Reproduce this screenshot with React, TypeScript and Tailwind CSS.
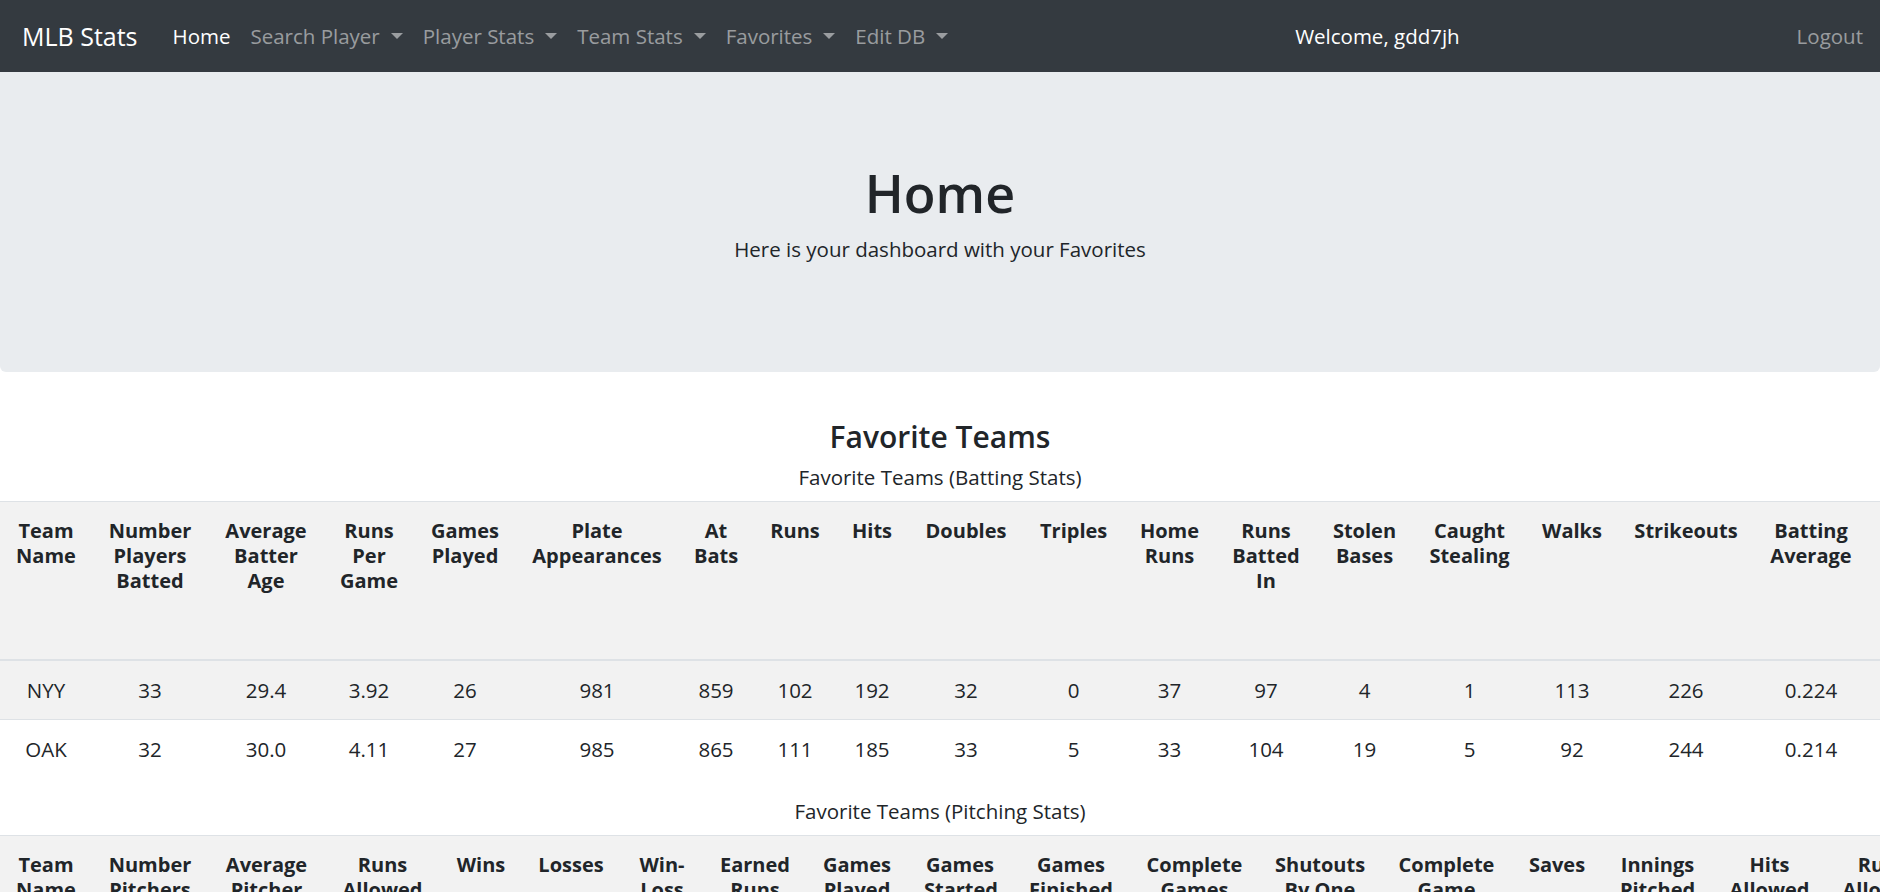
import { Fragment } from 'react'

type Col = { label: string; width: string }

const NAV_LINKS = [
  { label: 'Search Player' },
  { label: 'Player Stats' },
  { label: 'Team Stats' },
  { label: 'Favorites' },
  { label: 'Edit DB' },
]

const BATTING_COLS: Col[] = [
  { label: 'Team Name', width: 'w-[92px]' },
  { label: 'Number Players Batted', width: 'w-[116px]' },
  { label: 'Average Batter Age', width: 'w-[116px]' },
  { label: 'Runs Per Game', width: 'w-[90px]' },
  { label: 'Games Played', width: 'w-[102px]' },
  { label: 'Plate Appearances', width: 'w-[162px]' },
  { label: 'At Bats', width: 'w-[76px]' },
  { label: 'Runs', width: 'w-[82px]' },
  { label: 'Hits', width: 'w-[72px]' },
  { label: 'Doubles', width: 'w-[116px]' },
  { label: 'Triples', width: 'w-[99px]' },
  { label: 'Home Runs', width: 'w-[93px]' },
  { label: 'Runs Batted In', width: 'w-[100px]' },
  { label: 'Stolen Bases', width: 'w-[97px]' },
  { label: 'Caught Stealing', width: 'w-[113px]' },
  { label: 'Walks', width: 'w-[92px]' },
  { label: 'Strikeouts', width: 'w-[136px]' },
  { label: 'Batting Average', width: 'w-[114px]' },
  { label: 'On Base Percentage', width: 'w-[150px]' },
  { label: 'Slugging Percentage', width: 'w-[150px]' },
  { label: 'On Base Plus Slugging Percentage', width: 'w-[150px]' },
]

const BATTING_ROWS = [
  ['NYY', '33', '29.4', '3.92', '26', '981', '859', '102', '192', '32', '0', '37', '97', '4', '1', '113', '226', '0.224', '0.316', '0.401', '0.717'],
  ['OAK', '32', '30.0', '4.11', '27', '985', '865', '111', '185', '33', '5', '33', '104', '19', '5', '92', '244', '0.214', '0.295', '0.384', '0.679'],
]

const PITCHING_COLS: Col[] = [
  { label: 'Team Name', width: 'w-[92px]' },
  { label: 'Number Pitchers Used', width: 'w-[116px]' },
  { label: 'Average Pitcher Age', width: 'w-[117px]' },
  { label: 'Runs Allowed Per Game', width: 'w-[115px]' },
  { label: 'Wins', width: 'w-[82px]' },
  { label: 'Losses', width: 'w-[98px]' },
  { label: 'Win-Loss %', width: 'w-[84px]' },
  { label: 'Earned Runs Average', width: 'w-[102px]' },
  { label: 'Games Played', width: 'w-[102px]' },
  { label: 'Games Started', width: 'w-[104px]' },
  { label: 'Games Finished', width: 'w-[118px]' },
  { label: 'Complete Games', width: 'w-[129px]' },
  { label: 'Shutouts By One Pitcher', width: 'w-[122px]' },
  { label: 'Complete Game Shutouts', width: 'w-[131px]' },
  { label: 'Saves', width: 'w-[90px]' },
  { label: 'Innings Pitched', width: 'w-[111px]' },
  { label: 'Hits Allowed', width: 'w-[113px]' },
  { label: 'Runs Allowed', width: 'w-[113px]' },
  { label: 'Home Runs Allowed', width: 'w-[113px]' },
  { label: 'Walks Allowed', width: 'w-[113px]' },
]

const PITCHING_ROWS = [
  ['NYY', '24', '29.8', '4.12', '14', '12', '0.538', '3.78', '26', '26', '26', '0', '2', '0', '7', '231.0', '205', '107', '28', '84'],
  ['OAK', '22', '28.9', '4.30', '13', '14', '0.481', '3.95', '27', '27', '27', '1', '1', '1', '6', '238.1', '221', '116', '31', '90'],
]

function Caret() {
  return (
    <span className="ml-[11px] inline-block h-0 w-0 border-x-[6px] border-t-[6px] border-x-transparent border-t-current" />
  )
}

function Navbar() {
  return (
    <nav className="flex h-[72px] items-center bg-[#343a40] pl-[22px] pr-[17px]">
      <a href="#" className="mr-[25px] text-[25px] leading-[36px] text-white">
        MLB Stats
      </a>
      <a href="#" className="px-[10px] text-[20.5px] leading-[30px] text-white">
        Home
      </a>
      {NAV_LINKS.map((link) => (
        <a
          key={link.label}
          href="#"
          className="flex items-center px-[10px] text-[20.5px] leading-[30px] text-white/50"
        >
          {link.label}
          <Caret />
        </a>
      ))}
      <span className="mx-auto text-[20.5px] leading-[30px] text-white">Welcome, gdd7jh</span>
      <a href="#" className="text-[20.5px] leading-[30px] text-white/50">
        Logout
      </a>
    </nav>
  )
}

function StatsTable({ caption, cols, rows, width }: { caption: string; cols: Col[]; rows: string[][]; width: string }) {
  return (
    <Fragment>
      <div className="mb-[11px] text-center text-[20.5px] leading-[26px]">{caption}</div>
      <div className="mb-[20px] w-full overflow-hidden">
        <table className={`table-fixed border-collapse ${width}`}>
          <colgroup>
            {cols.map((c) => (
              <col key={c.label} className={c.width} />
            ))}
          </colgroup>
          <thead>
            <tr className="bg-[#f2f2f2]">
              {cols.map((c) => (
                <th
                  key={c.label}
                  className="h-[158px] border-t border-b-2 border-[#dee2e6] px-4 py-4 text-center align-top text-[20px] font-bold leading-[25px]"
                >
                  {c.label}
                </th>
              ))}
            </tr>
          </thead>
          <tbody>
            {rows.map((row, i) => (
              <tr key={row[0]} className={i % 2 === 0 ? 'bg-[#f2f2f2]' : 'bg-white'}>
                {row.map((v, j) => (
                  <td
                    key={j}
                    className="border-t border-[#dee2e6] px-4 py-4 text-center text-[20.5px] leading-[26px]"
                  >
                    {v}
                  </td>
                ))}
              </tr>
            ))}
          </tbody>
        </table>
      </div>
    </Fragment>
  )
}

export default function App() {
  return (
    <div className="min-h-screen overflow-hidden bg-white font-['Open_Sans',sans-serif] text-[#212529]">
      <Navbar />

      {/* Jumbotron */}
      <header className="flex h-[300px] flex-col items-center rounded-b-[6px] bg-[#e9ecef] pt-[88px]">
        <h1 className="mb-[9px] text-[52px] font-semibold leading-[65px]">Home</h1>
        <p className="text-[20.5px] leading-[30px]">Here is your dashboard with your Favorites</p>
      </header>

      <section className="mt-[46px]">
        <h2 className="mb-[9px] text-center text-[30px] font-semibold leading-[37px]">Favorite Teams</h2>
        <StatsTable
          caption="Favorite Teams (Batting Stats)"
          cols={BATTING_COLS}
          rows={BATTING_ROWS}
          width="w-[2318px]"
        />
        <StatsTable
          caption="Favorite Teams (Pitching Stats)"
          cols={PITCHING_COLS}
          rows={PITCHING_ROWS}
          width="w-[2165px]"
        />
      </section>
    </div>
  )
}
